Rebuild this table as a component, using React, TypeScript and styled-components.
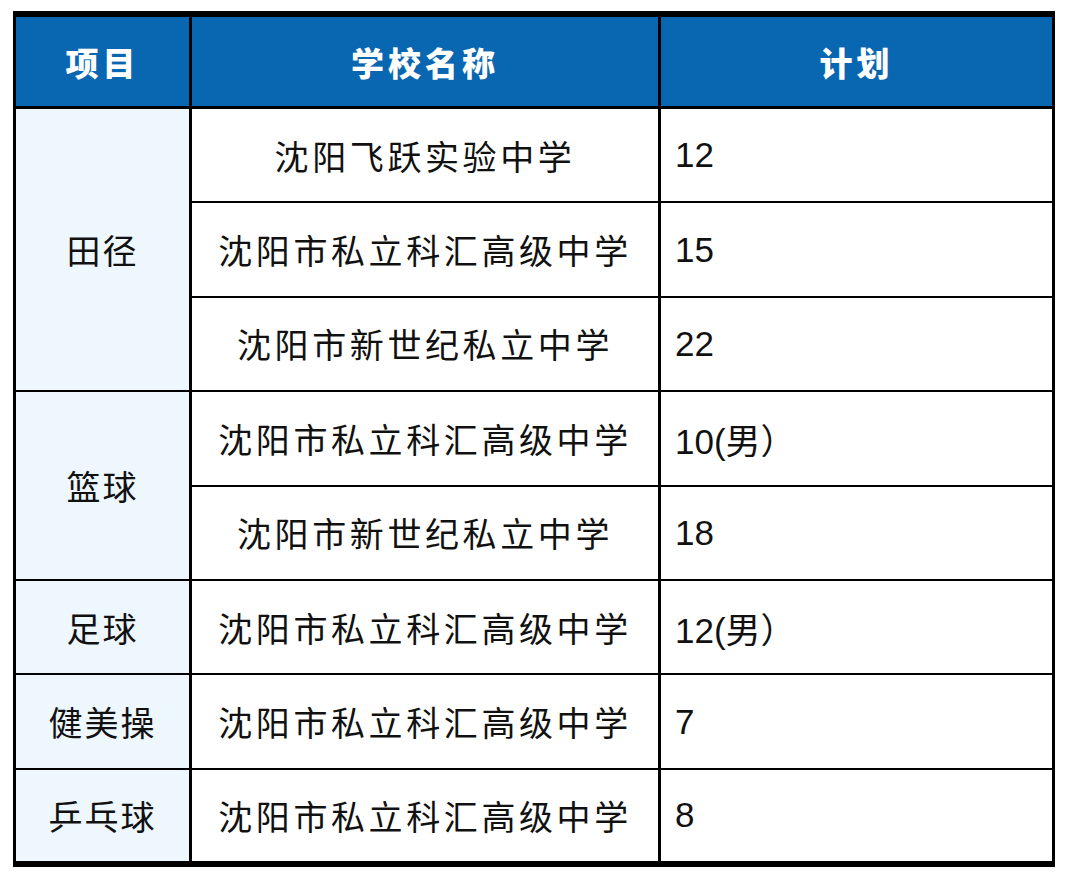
import styled, { createGlobalStyle } from "styled-components";

const GlobalStyle = createGlobalStyle`
  html, body {
    margin: 0;
    padding: 0;
    background: #fff;
  }
  body {
    font-family: "Noto Sans CJK SC", "Liberation Sans", sans-serif;
  }
`;

type Row = { sport?: string; span?: number; school: string; plan: string };

const rows: Row[] = [
  { sport: "田径", span: 3, school: "沈阳飞跃实验中学", plan: "12" },
  { school: "沈阳市私立科汇高级中学", plan: "15" },
  { school: "沈阳市新世纪私立中学", plan: "22" },
  { sport: "篮球", span: 2, school: "沈阳市私立科汇高级中学", plan: "10(男）" },
  { school: "沈阳市新世纪私立中学", plan: "18" },
  { sport: "足球", span: 1, school: "沈阳市私立科汇高级中学", plan: "12(男）" },
  { sport: "健美操", span: 1, school: "沈阳市私立科汇高级中学", plan: "7" },
  { sport: "乒乓球", span: 1, school: "沈阳市私立科汇高级中学", plan: "8" },
];

export default function App() {
  return (
    <>
      <GlobalStyle />
      <Page>
        <Table>
          <colgroup>
            <col style={{ width: 176 }} />
            <col style={{ width: 469 }} />
            <col style={{ width: 391 }} />
          </colgroup>
          <thead>
            <tr>
              <Th>项目</Th>
              <Th>学校名称</Th>
              <Th $last>计划</Th>
            </tr>
          </thead>
          <tbody>
            {rows.map((r, i) => {
              const lastRow = i === rows.length - 1;
              return (
                <Tr key={i} $last={lastRow}>
                  {r.sport && (
                    <SportTd rowSpan={r.span} $bottom={i + (r.span ?? 1) === rows.length}>
                      {r.sport}
                    </SportTd>
                  )}
                  <SchoolTd $bottom={lastRow}>{r.school}</SchoolTd>
                  <PlanTd $bottom={lastRow}>{r.plan}</PlanTd>
                </Tr>
              );
            })}
          </tbody>
        </Table>
      </Page>
    </>
  );
}

const Page = styled.div`
  padding: 11px 0 0 13px;
`;

const Table = styled.table`
  border-collapse: separate;
  border-spacing: 0;
  table-layout: fixed;
  width: 1042px;
  border-top: 6px solid #000;
  border-bottom: 6px solid #000;
  border-left: 3px solid #000;
  border-right: 3px solid #000;
`;

const Th = styled.th<{ $last?: boolean }>`
  height: 89px;
  padding: 0;
  background: #0966b1;
  color: #fff;
  font-size: 33px;
  font-weight: 900;
  letter-spacing: 4px;
  text-align: center;
  border-bottom: 3px solid #000;
  border-right: ${(p) => (p.$last ? "none" : "3px solid #000")};
`;

const Tr = styled.tr<{ $last?: boolean }>`
  height: ${(p) => (p.$last ? "91px" : "94.4px")};
`;

const Td = styled.td<{ $bottom?: boolean }>`
  padding: 0;
  color: #111;
  font-size: 34px;
  border-bottom: ${(p) => (p.$bottom ? "none" : "2px solid #000")};
`;

const SportTd = styled(Td)`
  background: #eef6fe;
  text-align: center;
  letter-spacing: 2px;
  border-right: 3px solid #000;
`;

const SchoolTd = styled(Td)`
  text-align: center;
  letter-spacing: 3.6px;
  border-right: 3px solid #000;
`;

const PlanTd = styled(Td)`
  padding-left: 14px;
  font-family: "Liberation Sans", "Noto Sans CJK SC", sans-serif;
  font-size: 35px;
`;
